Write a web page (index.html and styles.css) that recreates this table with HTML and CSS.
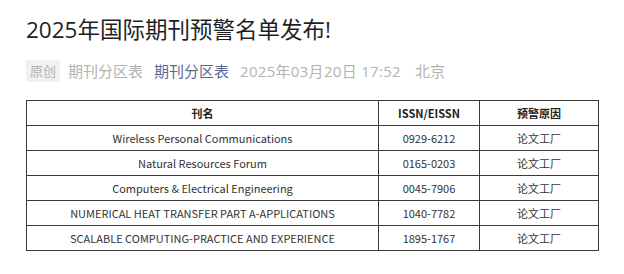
FILE: index.html
```html
<!DOCTYPE html>
<html lang="zh-CN">
<head>
<meta charset="utf-8">
<link rel="stylesheet" href="styles.css">
</head>
<body>
<div class="page">
  <h1 class="title">2025年国际期刊预警名单发布!</h1>
  <div class="meta">
    <span class="tag">原创</span>
    <span class="muted">期刊分区表</span>
    <span class="account">期刊分区表</span>
    <span class="muted date">2025年03月20日 17:52</span>
    <span class="muted">北京</span>
  </div>
  <table class="list">
    <colgroup><col class="c1"><col class="c2"><col class="c3"></colgroup>
    <thead>
      <tr><th>刊名</th><th>ISSN/EISSN</th><th>预警原因</th></tr>
    </thead>
    <tbody>
      <tr><td>Wireless Personal Communications</td><td>0929-6212</td><td>论文工厂</td></tr>
      <tr><td>Natural Resources Forum</td><td>0165-0203</td><td>论文工厂</td></tr>
      <tr><td>Computers &amp; Electrical Engineering</td><td>0045-7906</td><td>论文工厂</td></tr>
      <tr><td>NUMERICAL HEAT TRANSFER PART A-APPLICATIONS</td><td>1040-7782</td><td>论文工厂</td></tr>
      <tr><td>SCALABLE COMPUTING-PRACTICE AND EXPERIENCE</td><td>1895-1767</td><td>论文工厂</td></tr>
    </tbody>
  </table>
</div>
</body>
</html>
```
FILE: styles.css
```css
html, body {
  margin: 0;
  padding: 0;
  background: #fff;
}
.page {
  padding: 12px 26px 0 26px;
  font-family: "Noto Sans CJK SC", "Noto Sans", sans-serif;
}
.title {
  margin: 0;
  font-family: "Open Sans", "Noto Sans CJK SC", sans-serif;
  font-size: 22.5px;
  font-weight: 400;
  line-height: 36px;
  color: #1f1f1f;
}
.meta {
  display: flex;
  align-items: center;
  gap: 11px;
  margin-top: 11px;
  font-size: 15px;
  line-height: 22px;
  height: 24px;
}
.tag {
  background: #f1f1f1;
  color: #b2b2b2;
  font-size: 13px;
  padding: 0 4px;
  line-height: 22px;
  border-radius: 2px;
  margin-right: -3px;
}
.muted {
  color: #b3b3b3;
}
.date {
  font-family: "Open Sans", "Noto Sans CJK SC", sans-serif;
  letter-spacing: 0.3px;
  margin-right: 3px;
}
.account {
  color: #576b95;
}
.list {
  margin-top: 17px;
  width: 572px;
  border-collapse: collapse;
  table-layout: fixed;
  font-size: 11px;
  color: #333;
}
.c1 { width: 352px; }
.c2 { width: 101px; }
.c3 { width: 119px; }
.list th, .list td {
  border: 1px solid #3a3a3a;
  height: 24px;
  padding: 0;
  text-align: center;
  white-space: nowrap;
  line-height: 14px;
}
.list th {
  font-weight: 700;
  color: #222;
}
```
